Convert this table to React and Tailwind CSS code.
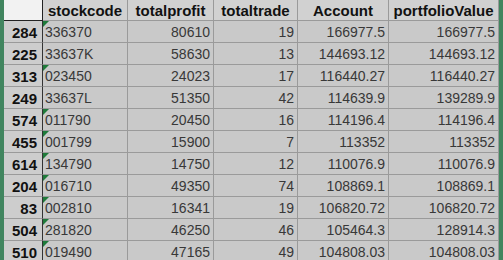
const rows = [
  ["284", "336370", "80610", "19", "166977.5", "166977.5", true],
  ["225", "33637K", "58630", "13", "144693.12", "144693.12", false],
  ["313", "023450", "24023", "17", "116440.27", "116440.27", true],
  ["249", "33637L", "51350", "42", "114639.9", "139289.9", false],
  ["574", "011790", "20450", "16", "114196.4", "114196.4", true],
  ["455", "001799", "15900", "7", "113352", "113352", true],
  ["614", "134790", "14750", "12", "110076.9", "110076.9", true],
  ["204", "016710", "49350", "74", "108869.1", "108869.1", true],
  ["83", "002810", "16341", "19", "106820.72", "106820.72", true],
  ["504", "281820", "46250", "46", "105464.3", "128914.3", true],
  ["510", "019490", "47165", "49", "104808.03", "104808.03", true],
];

const cols = ["stockcode", "totalprofit", "totaltrade", "Account", "portfolioValue"];
const widths = ["w-[85px]", "w-[86px]", "w-[84px]", "w-[91px]", "w-[110px]"];

export default function App() {
  return (
    <div
      className="w-[503px] h-[260px] overflow-hidden bg-[#41855f] flex"
      style={{ fontFamily: '"Liberation Sans", Arial, sans-serif' }}
    >
      <div className="w-[4px] shrink-0" />
      <div className="w-[495px] shrink-0 bg-[#c9c9c9] flex flex-col">
        <div className="flex h-[21px] shrink-0">
          <div className="w-[39px] shrink-0 bg-[#f2f2f2] border-b border-r border-[#222]" />
          {cols.map((c, i) => (
            <div
              key={c}
              className={`${widths[i]} shrink-0 bg-[#d1d1d1] border-r border-b border-[#9a9a9a] flex items-center justify-center pt-[1px] text-[15px] font-bold text-[#111] leading-none`}
            >
              {c}
            </div>
          ))}
        </div>
        {rows.map((r) => (
          <div key={r[0]} className="flex h-[22px] shrink-0">
            <div className="w-[39px] shrink-0 bg-[#cdcdcd] border-r border-b border-r-[#333] border-b-[#9a9a9a] flex items-center justify-end pr-[5px] pt-[1px] text-[15px] font-bold text-[#111] leading-none">
              {r[0]}
            </div>
            <div className="w-[85px] shrink-0 relative border-r border-b border-[#9a9a9a] flex items-center pl-[2px] pt-[1px] text-[14px] text-[#383838] leading-none">
              {r[6] && (
                <div className="absolute left-0 top-0 w-0 h-0 border-t-[6px] border-r-[6px] border-t-[#1f7a3a] border-r-transparent" />
              )}
              {r[1]}
            </div>
            {[r[2], r[3], r[4], r[5]].map((v, i) => (
              <div
                key={i}
                className={`${widths[i + 1]} shrink-0 border-r border-b border-[#9a9a9a] flex items-center justify-end pr-[3px] pt-[1px] text-[14px] text-[#383838] leading-none`}
              >
                {v}
              </div>
            ))}
          </div>
        ))}
      </div>
      <div className="w-[4px] shrink-0" />
    </div>
  );
}
